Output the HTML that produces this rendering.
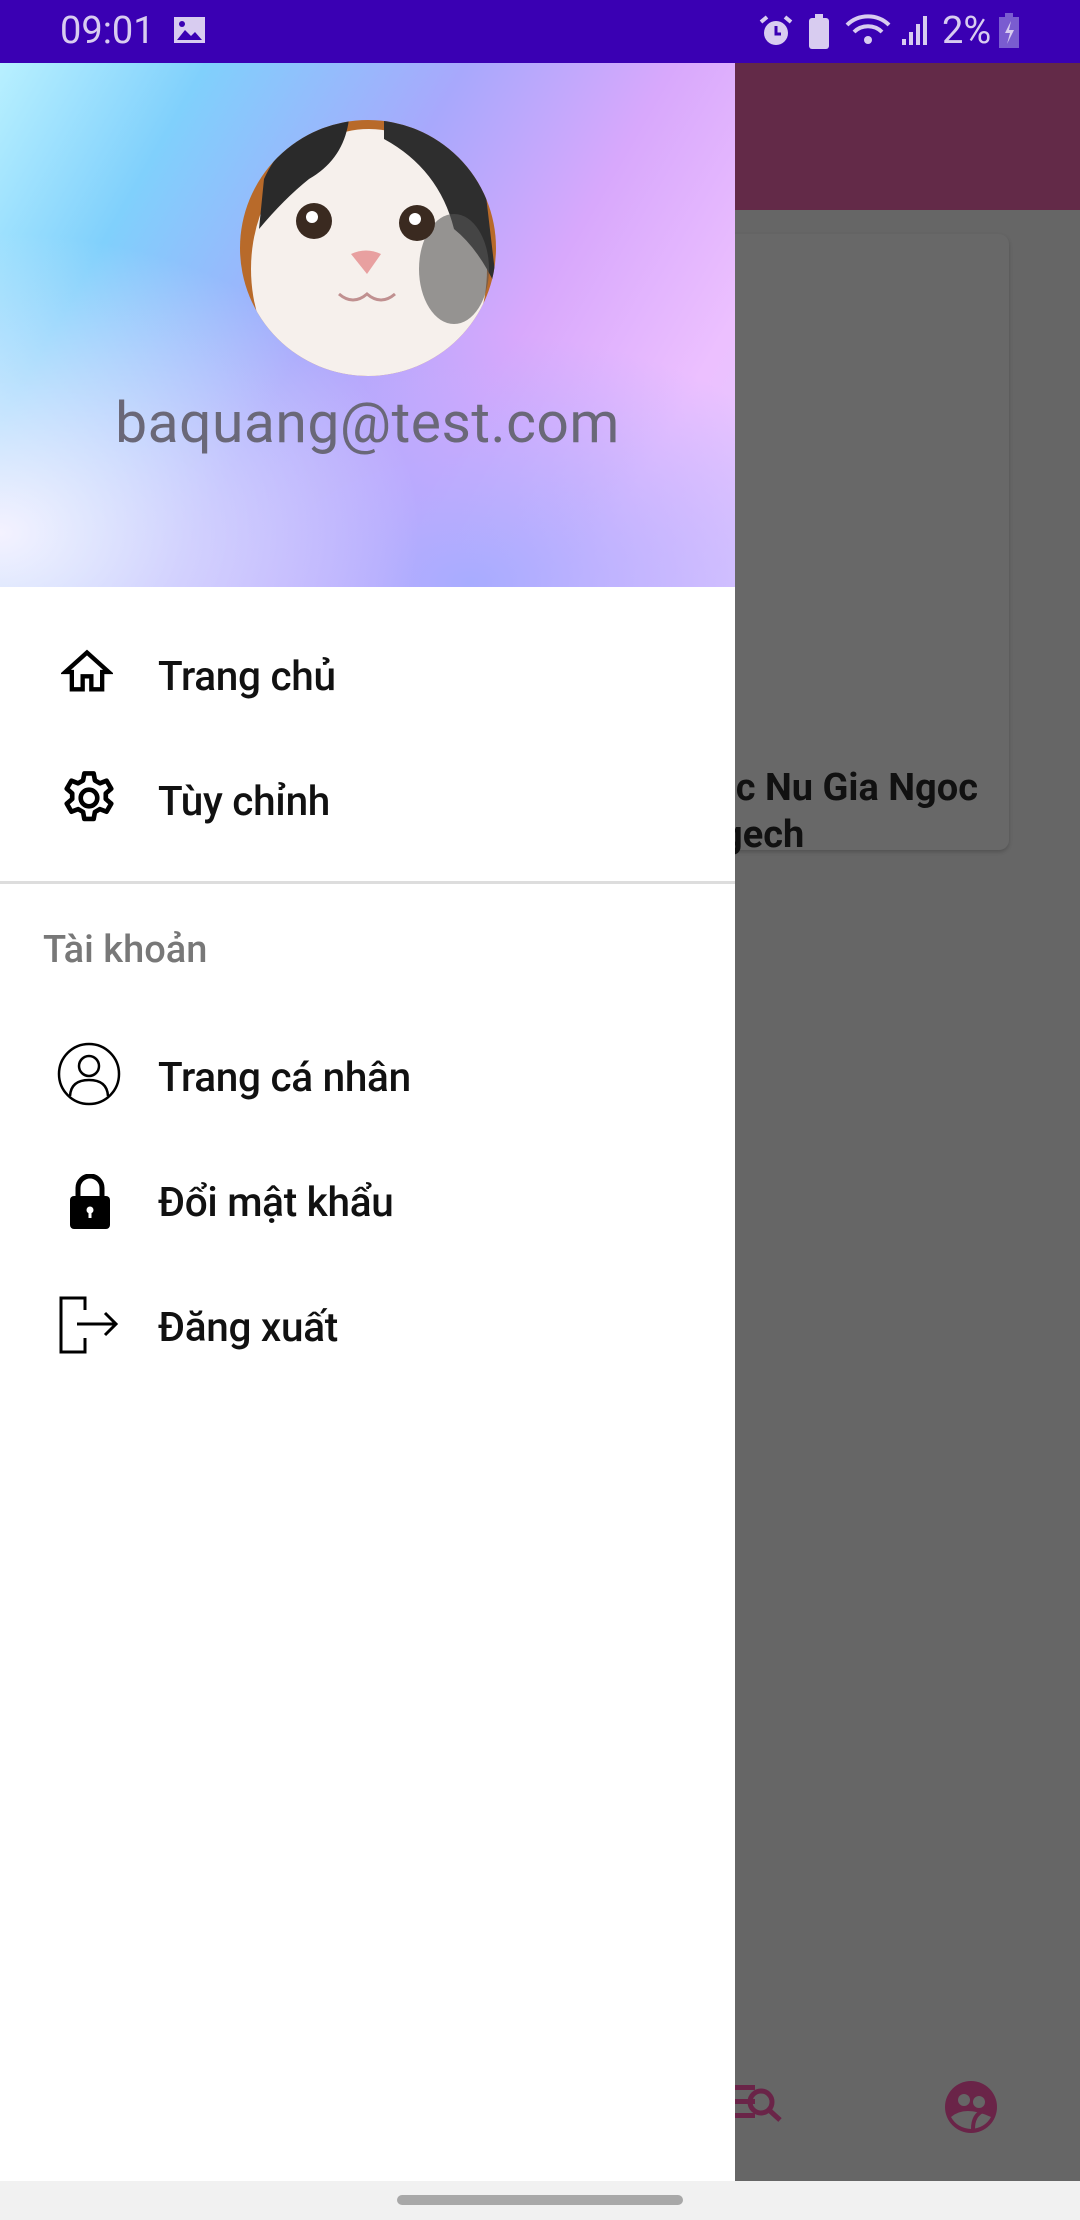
<!DOCTYPE html>
<html><head><meta charset="utf-8"><style>
*{margin:0;padding:0;box-sizing:border-box}
body{width:1080px;height:2220px;position:relative;overflow:hidden;background:#666;font-family:"Roboto","Liberation Sans",sans-serif}
.abs{position:absolute}
.status{left:0;top:0;width:1080px;height:63px;background:#3a00b3;color:#d8ccf0;font-size:38px}
.drawer{left:0;top:63px;width:735px;height:2118px;background:#fff}
.header{left:0;top:0;width:735px;height:524px;background:
radial-gradient(ellipse 420px 300px at 0px 470px,#f4f2ff 0%,rgba(244,242,255,0) 100%),
radial-gradient(ellipse 400px 250px at 470px 520px,#a8acff 0%,rgba(168,172,255,0) 100%),
linear-gradient(120deg,#b8f0ff 0%,#80d0fc 20%,#a8a8fc 45%,#d8a8fc 65%,#ecc0ff 85%,#e4c8ff 100%)}
.item{left:158px;font-size:40.5px;color:#111;font-weight:500;letter-spacing:-0.3px}
.ic{left:60px}
</style></head><body>
<div class="abs status">
<span class="abs" style="left:60px;top:9px">09:01</span>
<svg class="abs" style="left:173px;top:16px" width="33" height="28"><rect x="1" y="1" width="31" height="26" fill="#d8ccf0"/><path d="M4 24 L12 14 L18 20 L22 16 L29 24Z" fill="#3a00b3"/><circle cx="9" cy="8" r="3" fill="#3a00b3"/></svg>
<svg class="abs" style="left:758px;top:14px" width="36" height="34"><circle cx="18" cy="19" r="12" fill="#d8ccf0"/><path d="M18 12v8h5" stroke="#3a00b3" stroke-width="3" fill="none"/><path d="M3 8l6-5M33 8l-6-5" stroke="#d8ccf0" stroke-width="4"/></svg>
<svg class="abs" style="left:808px;top:14px" width="22" height="36"><rect x="1" y="4" width="20" height="31" rx="3" fill="#d8ccf0"/><rect x="7" y="0" width="8" height="5" fill="#d8ccf0"/></svg>
<svg class="abs" style="left:845px;top:13px" width="50" height="36"><path d="M2 12 A30 30 0 0 1 44 12" stroke="#d8ccf0" stroke-width="4" fill="none"/><path d="M9 19 A20 20 0 0 1 37 19" stroke="#d8ccf0" stroke-width="4" fill="none"/><circle cx="23" cy="27" r="4" fill="#d8ccf0"/></svg>
<svg class="abs" style="left:900px;top:15px" width="28" height="32"><rect x="2" y="24" width="4" height="6" fill="#d8ccf0"/><rect x="9" y="17" width="4" height="13" fill="#d8ccf0"/><rect x="16" y="9" width="4" height="21" fill="#d8ccf0"/><rect x="23" y="1" width="4" height="29" fill="#d8ccf0"/></svg>
<span class="abs" style="left:942px;top:9px">2%</span>
<svg class="abs" style="left:998px;top:13px" width="22" height="36"><rect x="1" y="4" width="20" height="31" fill="#7a5cd0"/><rect x="7" y="0" width="8" height="5" fill="#7a5cd0"/><path d="M13 8 L7 20 h5 l-3 11 7-14h-5z" fill="#d8ccf0"/></svg>
</div>

<div class="abs" style="left:735px;top:63px;width:345px;height:147px;background:#632a48"></div>
<div class="abs" style="left:600px;top:234px;width:409px;height:616px;background:#686868;border-radius:10px;box-shadow:0 2px 4px rgba(0,0,0,.2)"></div>
<div class="abs" style="left:660px;top:765px;width:318px;font-size:38px;font-weight:bold;color:#111;text-align:right;line-height:46px;white-space:nowrap">c Nu Gia Ngoc</div>
<div class="abs" style="left:735px;top:812px;font-size:38px;font-weight:bold;color:#111;line-height:46px;white-space:nowrap;width:100px;overflow:hidden"><span style="margin-left:-14px">gech</span></div>
<svg class="abs" style="left:700px;top:2080px" width="100" height="50"><rect x="35" y="5" width="20" height="5" fill="#6a2448"/><rect x="35" y="19" width="20" height="5" fill="#6a2448"/><rect x="35" y="33" width="20" height="5" fill="#6a2448"/><circle cx="61" cy="22" r="11" stroke="#6a2448" stroke-width="5" fill="none"/><path d="M69 30 L80 40" stroke="#6a2448" stroke-width="5"/></svg>
<svg class="abs" style="left:945px;top:2081px" width="54" height="54"><circle cx="26" cy="26" r="26" fill="#6a2448"/><circle cx="19" cy="19" r="6" fill="#666"/><circle cx="34" cy="21" r="6" fill="#666"/><path d="M6 36 Q20 24 46 36 Q40 47 26 48 Q12 47 6 36Z" fill="#666"/><path d="M28 48 Q28 34 38 30" stroke="#6a2448" stroke-width="4" fill="none"/></svg>

<div class="abs drawer">
<div class="abs header">
<svg class="abs" style="left:239px;top:56px" width="258" height="258" viewBox="0 0 258 258">
<defs><clipPath id="c"><ellipse cx="129" cy="129" rx="128" ry="128"/></clipPath></defs>
<g clip-path="url(#c)">
<rect width="258" height="258" fill="#b86a2a"/>
<ellipse cx="130" cy="150" rx="118" ry="140" fill="#f6f0ec"/>
<path d="M25 60 Q50 5 110 0 Q105 40 70 60 Q45 80 20 110Z" fill="#2a2a2a"/>
<path d="M145 0 Q215 5 245 60 L258 170 Q240 130 215 110 Q200 50 145 20Z" fill="#2e2e2e"/>
<ellipse cx="215" cy="150" rx="35" ry="55" fill="#555" opacity=".6"/>
<ellipse cx="75" cy="102" rx="18" ry="18" fill="#3a2a20"/><circle cx="73" cy="98" r="6" fill="#fff"/>
<ellipse cx="178" cy="104" rx="18" ry="18" fill="#3a2a20"/><circle cx="176" cy="100" r="6" fill="#fff"/>
<path d="M112 135 Q127 128 142 135 L128 155Z" fill="#e8a0a0"/>
<path d="M100 175 Q114 187 128 175 Q142 187 156 175" stroke="#c09090" stroke-width="3" fill="none"/>
</g></svg>
<div class="abs" style="left:0;top:326px;width:735px;text-align:center;font-size:57px;color:#6a6878;letter-spacing:0.5px">baquang@test.com</div>
</div>

<svg class="abs ic" style="left:61px;top:583px" width="52" height="52" viewBox="0 0 24 24"><path d="M12 3 L2 12 H5 V20 H10 V14 H14 V20 H19 V12 H22Z" fill="none" stroke="#000" stroke-width="2"/></svg>
<div class="abs item" style="top:589px">Trang chủ</div>

<svg class="abs ic" style="left:58px;top:704px" width="62" height="62" viewBox="0 0 24 24"><path fill="none" stroke="#000" stroke-width="1.8" stroke-linejoin="round" d="M10.2 2.5h3.6l.5 2.7 1.9 1.1 2.6-1 1.8 3.1-2.1 1.8v2.2l2.1 1.8-1.8 3.1-2.6-1-1.9 1.1-.5 2.7h-3.6l-.5-2.7-1.9-1.1-2.6 1-1.8-3.1 2.1-1.8v-2.2L3.4 8.4l1.8-3.1 2.6 1 1.9-1.1z"/><circle cx="12" cy="12" r="3.2" fill="none" stroke="#000" stroke-width="1.8"/></svg>
<div class="abs item" style="top:714px">Tùy chỉnh</div>

<div class="abs" style="left:0;top:818px;width:735px;height:3px;background:#ddd"></div>
<div class="abs" style="left:43px;top:865px;font-size:38px;color:#787878;font-weight:500">Tài khoản</div>

<svg class="abs" style="left:57px;top:979px" width="64" height="64" viewBox="0 0 64 64"><circle cx="32" cy="32" r="30" fill="none" stroke="#000" stroke-width="2.5"/><circle cx="32" cy="24" r="10" fill="none" stroke="#000" stroke-width="2.5"/><path d="M13 54 Q14 38 32 38 Q50 38 51 54" fill="none" stroke="#000" stroke-width="2.5"/></svg>
<div class="abs item" style="top:990px">Trang cá nhân</div>

<svg class="abs" style="left:68px;top:1111px" width="44" height="56" viewBox="0 0 44 56"><path d="M10 24 V14 A12 12 0 0 1 34 14 V24" fill="none" stroke="#000" stroke-width="5"/><rect x="2" y="22" width="40" height="33" rx="4" fill="#000"/><circle cx="22" cy="36" r="3.5" fill="#fff"/><rect x="20.5" y="36" width="3" height="8" fill="#fff"/></svg>
<div class="abs item" style="top:1115px">Đổi mật khẩu</div>

<svg class="abs" style="left:58px;top:1233px" width="62" height="58" viewBox="0 0 62 58"><path d="M27 14 V2 H3 V56 H27 V42" fill="none" stroke="#000" stroke-width="3"/><path d="M19 28 H57 M47 17 L58 28 L47 39" fill="none" stroke="#000" stroke-width="3"/></svg>
<div class="abs item" style="top:1240px">Đăng xuất</div>
</div>

<div class="abs" style="left:0;top:2181px;width:1080px;height:39px;background:#f1f1f1"></div>
<div class="abs" style="left:397px;top:2195px;width:286px;height:10px;border-radius:5px;background:#a8a8a8"></div>
</body></html>
